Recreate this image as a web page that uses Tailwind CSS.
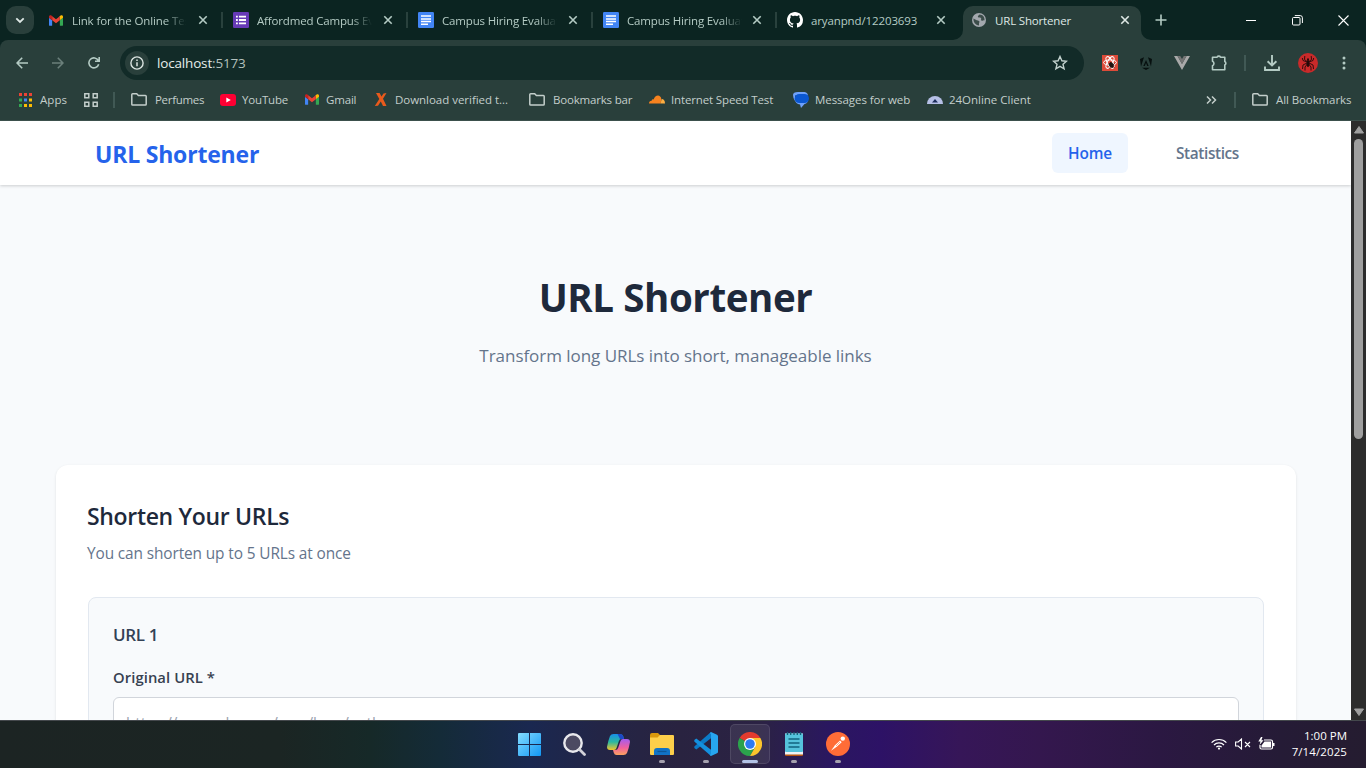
<!DOCTYPE html>
<html lang="en">
<head>
<meta charset="utf-8">
<title>URL Shortener</title>
<script src="https://cdn.jsdelivr.net/npm/@tailwindcss/browser@4"></script>
</head>
<body class="w-[1366px] h-[768px] overflow-hidden flex flex-col font-['Open_Sans','Noto_Sans',sans-serif] bg-[#293f3b]">
<svg class="hidden">
  <symbol id="x" viewBox="0 0 10 10"><path d="M1.300 1.300l7.400 7.400M8.700 1.300L1.300 8.700" stroke="currentColor" stroke-width="1.600"/></symbol>
  <symbol id="gmail" viewBox="0 0 16 12"><path d="M1 12h2.600V5.600L0 2.800V11a1 1 0 001 1z" fill="#4285f4"/><path d="M12.400 12H15a1 1 0 001-1V2.800l-3.600 2.800z" fill="#34a853"/><path d="M12.400 1.200v4.400L16 2.800V1.600C16 .2 14.400-.5 13.200.4z" fill="#fbbc04"/><path d="M3.600 5.600V1.200L8 4.500l4.400-3.300v4.400L8 9z" fill="#ea4335"/><path d="M0 1.600v1.200l3.600 2.800V1.200L2.800.4C1.600-.5 0 .2 0 1.600z" fill="#c5221f"/></symbol>
  <symbol id="docs" viewBox="0 0 16 16"><rect width="16" height="16" rx="1.200" fill="#4285f4"/><path d="M3 4h10M3 6.900h10M3 9.500h10M3 12.300h7" stroke="#fff" stroke-width="1.500"/></symbol>
  <symbol id="folder" viewBox="0 0 16 13"><path d="M1.700.8h4l1.700 1.700h7q.8 0 .8.8v8q0 .8-.8.8H1.600q-.8 0-.8-.8V1.600q0-.8.9-.8z" fill="none" stroke="#c3cecb" stroke-width="1.500"/></symbol>
</svg>

<!-- Tab strip -->
<div class="h-[40px] shrink-0 bg-[#0b2421] flex text-[11.5px] text-[#b4cbc4] pl-[6px]">
  <div class="w-[28px] h-[28px] mt-[6px] rounded-[10px] bg-[#293f3b] flex items-center justify-center shrink-0"><svg width="10" height="7" viewBox="0 0 10 7"><path d="M1.300 1.300L5 5l3.700-3.700" fill="none" stroke="#dfe9e6" stroke-width="1.800"/></svg></div>
  <div class="w-[185px] ml-[4px] pl-[11px] flex items-center shrink-0">
    <svg width="14" height="11" class="mr-[9px] shrink-0"><use href="#gmail"/></svg>
    <span class="w-[115px] mt-[2px] overflow-hidden whitespace-nowrap tracking-[-0.12px] [mask-image:linear-gradient(to_right,#000_82%,transparent)]">Link for the Online Test</span>
    <svg width="10" height="10" class="ml-[12px] shrink-0"><use href="#x"/></svg>
    <span class="w-[2px] h-[16px] bg-[#29413d] ml-[13px]"></span>
  </div>
  <div class="w-[185px] pl-[10px] flex items-center shrink-0">
    <svg width="16" height="16" viewBox="0 0 16 16" class="mr-[8px] shrink-0"><rect width="16" height="16" rx="1.200" fill="#673ab7"/><path d="M6 4.700h7M6 8h7M6 11.300h7M3 4.700h1.800M3 8h1.800M3 11.300h1.800" stroke="#fff" stroke-width="1.800"/></svg>
    <span class="w-[115px] mt-[2px] overflow-hidden whitespace-nowrap tracking-[-0.16px] [mask-image:linear-gradient(to_right,#000_82%,transparent)]">Affordmed Campus Evaluation</span>
    <svg width="10" height="10" class="ml-[11px] shrink-0"><use href="#x"/></svg>
    <span class="w-[2px] h-[16px] bg-[#29413d] ml-[13px]"></span>
  </div>
  <div class="w-[185px] pl-[10px] flex items-center shrink-0">
    <svg width="16" height="16" class="mr-[8px] shrink-0"><use href="#docs"/></svg>
    <span class="w-[115px] mt-[2px] overflow-hidden whitespace-nowrap tracking-[-0.16px] [mask-image:linear-gradient(to_right,#000_82%,transparent)]">Campus Hiring Evaluation</span>
    <svg width="10" height="10" class="ml-[11px] shrink-0"><use href="#x"/></svg>
    <span class="w-[2px] h-[16px] bg-[#29413d] ml-[13px]"></span>
  </div>
  <div class="w-[184px] pl-[10px] flex items-center shrink-0">
    <svg width="16" height="16" class="mr-[8px] shrink-0"><use href="#docs"/></svg>
    <span class="w-[115px] mt-[2px] overflow-hidden whitespace-nowrap tracking-[-0.16px] [mask-image:linear-gradient(to_right,#000_82%,transparent)]">Campus Hiring Evaluation</span>
    <svg width="10" height="10" class="ml-[10px] shrink-0"><use href="#x"/></svg>
    <span class="w-[2px] h-[16px] bg-[#29413d] ml-[13px]"></span>
  </div>
  <div class="w-[177px] pl-[10px] flex items-center shrink-0">
    <svg width="16" height="16" viewBox="0 0 16 16" class="mr-[8px] shrink-0"><path fill="#fff" d="M8 0C3.580 0 0 3.580 0 8c0 3.540 2.290 6.530 5.470 7.590.4.070.55-.17.55-.38 0-.19-.01-.82-.01-1.490-2.010.37-2.530-.49-2.690-.94-.09-.23-.48-.94-.82-1.130-.28-.15-.68-.52-.01-.53.63-.01 1.080.58 1.230.82.720 1.210 1.870.87 2.330.66.070-.52.280-.87.510-1.070-1.780-.2-3.640-.89-3.640-3.950 0-.87.310-1.590.82-2.150-.08-.2-.36-1.020.08-2.120 0 0 .67-.21 2.200.82.640-.18 1.320-.27 2-.27s1.360.09 2 .27c1.530-1.040 2.200-.82 2.200-.82.440 1.100.160 1.920.080 2.120.510.560.820 1.270.820 2.150 0 3.070-1.870 3.750-3.650 3.950.290.250.540.730.540 1.480 0 1.070-.01 1.930-.01 2.200 0 .210.150.460.550.380A8.010 8.010 0 0016 8c0-4.420-3.580-8-8-8z"/></svg>
    <span class="w-[115px] mt-[2px] whitespace-nowrap tracking-[-0.12px]">aryanpnd/12203693</span>
    <svg width="10" height="10" class="ml-[10px] shrink-0"><use href="#x"/></svg>
  </div>
  <div class="flex items-end shrink-0">
    <svg width="10" height="10" class="-ml-[1px]" viewBox="0 0 10 10"><path d="M0 10A10 10 0 0010 0V10z" fill="#293f3b"/></svg>
    <div class="w-[178px] h-[34px] rounded-t-[10px] bg-[#293f3b] flex items-center pl-[9px] pb-[6px] text-[#dfe9e6]">
      <svg width="14" height="14" viewBox="0 0 14 14" class="mr-[9px] shrink-0"><circle cx="7" cy="7" r="7" fill="#a3a8ae"/><path d="M1.500 5.500c2 .8 2.600 2 4.500 2 1.500.5 2 1.500 1 2.500v2.500C3.500 12 1.200 9.500 1.500 5.500zM7.500 1.500c-1 1-2 1.300-1.500 2.500S8 4 9 5.200 8 6.800 9.500 7.500s1.500-.5 3 0C12.800 4 11 1.800 7.500 1.500z" fill="#3c4d4a"/></svg>
      <span class="w-[125px] mt-[2px] tracking-[-0.17px]">URL Shortener</span>
      <svg width="10" height="10" class="shrink-0"><use href="#x"/></svg>
    </div>
    <svg width="10" height="10" viewBox="0 0 10 10"><path d="M10 10A10 10 0 010 0V10z" fill="#293f3b"/></svg>
  </div>
  <div class="flex-1 flex items-center text-white">
    <svg width="12" height="12" viewBox="0 0 12 12" class="ml-[4px]"><path d="M6 .5v11M.5 6h11" stroke="#b4cbc4" stroke-width="1.600"/></svg>
    <svg width="10" height="1" class="ml-[79px]"><path d="M0 .5h10" stroke="currentColor"/></svg>
    <svg width="11" height="11" viewBox="0 0 11 11" class="ml-[36px]" fill="none" stroke="currentColor"><rect x=".5" y="2.500" width="7.500" height="7.500" rx="1"/><path d="M2.800.6h5.400q2.200 0 2.200 2.200v5.200"/></svg>
    <svg width="11" height="11" viewBox="0 0 11 11" class="ml-[35px]"><path d="M.5.5l10 10M10.500.5l-10 10" stroke="currentColor" stroke-width="1.100"/></svg>
  </div>
</div>

<!-- Toolbar -->
<div class="h-[46px] shrink-0 bg-[#0b2421]">
<div class="h-full bg-[#293f3b] rounded-t-[8px] flex items-center pl-[16px] text-[#b4cbc4]">
  <svg width="12" height="12" viewBox="0 0 12 12" fill="none" stroke="currentColor" stroke-width="1.600"><path d="M12 6H1.200M6.200.7L1 6l5.200 5.300"/></svg>
  <svg width="12" height="12" viewBox="0 0 12 12" fill="none" stroke="#6b807b" stroke-width="1.600" class="ml-[24px]"><path d="M0 6h10.800M5.800.7L11 6l-5.200 5.300"/></svg>
  <svg width="12" height="12" viewBox="0 0 12 12" fill="none" stroke="currentColor" stroke-width="1.600" class="ml-[24px]"><path d="M10.700 7.300A5 5 0 1110.300 3.500M11.200 0v4.300H7"/></svg>
  <div class="w-[964px] h-[34px] rounded-full bg-[#122b28] ml-[20px] flex items-center pl-[5px] shrink-0">
    <div class="w-[24px] h-[24px] rounded-full bg-[#293f3b] flex items-center justify-center"><svg width="14" height="14" viewBox="0 0 14 14"><circle cx="7" cy="7" r="6.100" fill="none" stroke="#dbe4e1" stroke-width="1.400"/><path d="M7 6.300v4M7 3.500V5" stroke="#dbe4e1" stroke-width="1.500"/></svg></div>
    <span class="ml-[8px] text-[13.5px] tracking-[-0.17px] text-[#e6eeeb]">localhost<span class="text-[#b4c1be]">:5173</span></span>
    <svg width="16" height="16" viewBox="0 0 16 16" class="ml-auto mr-[16px]"><path d="M8 1.500l1.900 4.300 4.600.4-3.500 3.100 1.100 4.600L8 11.400l-4.100 2.500L5 9.300 1.500 6.200l4.600-.4z" fill="none" stroke="#c3d2ce" stroke-width="1.400"/></svg>
  </div>
  <svg width="16" height="16" viewBox="0 0 16 16" class="ml-[18px]"><path fill="#dd4b39" d="M0 0h16v16H0z"/><g fill="none" stroke="#fff" stroke-width="1"><ellipse cx="8" cy="7.500" rx="6.500" ry="2.600"/><ellipse cx="8" cy="7.500" rx="6.500" ry="2.600" transform="rotate(60 8 7.500)"/><ellipse cx="8" cy="7.500" rx="6.500" ry="2.600" transform="rotate(120 8 7.500)"/></g><ellipse cx="9.300" cy="10" rx="2.200" ry="2.800" fill="#20130f" transform="rotate(-35 9.300 10)"/><path d="M6.500 9l6 3.500M12.500 8.500L7.500 13M8.500 7l2 6" stroke="#20130f" stroke-width=".8"/></svg>
  <svg width="12" height="13" viewBox="0 0 12 13" class="ml-[22px]" fill="#07100f"><path d="M0 2l4-1.800L1 9.500zM12 2L8 .2l3 9.300zM6 3L3.300 9h1.500L6 6l1.200 3h1.500zM2 10.800h8L6 13z"/></svg>
  <svg width="16" height="14" viewBox="0 0 16 14" class="ml-[22px]"><path d="M0 0h3.500L8 8l4.500-8H16L8 14z" fill="#a9a9a9"/><path d="M3.500 0h2.700L8 3l1.800-3h2.700L8 8z" fill="#747474"/></svg>
  <svg width="17" height="17" viewBox="0 0 17 17" class="ml-[21px] -mr-px -mt-[2px]"><path d="M1.500 3.200h4.600a1.900 1.900 0 013.400 0h4.300v4.300a1.900 1.900 0 010 3.400v4.800H1.500v-4a2.400 2.400 0 000-4.400z" fill="none" stroke="#b4cbc4" stroke-width="1.600" stroke-linejoin="round"/></svg>
  <span class="w-[2px] h-[16px] bg-[#415955] ml-[17px]"></span>
  <svg width="16" height="16" viewBox="0 0 16 16" class="ml-[18px]" fill="none" stroke="#b4cbc4" stroke-width="1.900"><path d="M8 0v10M3.600 6.200L8 10.500l4.400-4.300M1 11.500V15h14v-3.500"/></svg>
  <svg width="20" height="20" viewBox="0 0 20 20" class="ml-[18px]"><circle cx="10" cy="10" r="10" fill="#c92a2a"/><g fill="none" stroke="#240a0a" stroke-width=".9"><path d="M9 8.500L6.500 6.500 6.800 3M11 8.500l2.500-2 -.3-3.500M9 9L5 7.500 4.300 5M11 9l4-1.500.7-2.500M9 10l-4 2-.5 4M11 10l4 2 .5 4M9.300 11l-2.300 3v3.500M10.700 11l2.300 3v3.500"/></g><ellipse cx="10" cy="6.500" rx="1" ry="1.200" fill="#240a0a"/><ellipse cx="10" cy="10.500" rx="1.400" ry="3.600" fill="#240a0a"/></svg>
  <svg width="4" height="14" viewBox="0 0 4 14" class="ml-[24px]" fill="#b4cbc4"><circle cx="2" cy="2" r="1.500"/><circle cx="2" cy="7" r="1.500"/><circle cx="2" cy="12" r="1.500"/></svg>
</div>
</div>

<!-- Bookmarks -->
<div class="h-[35px] shrink-0 flex items-center pl-[18px] pb-[7px] text-[11.5px] whitespace-nowrap text-[#c3cecb] border-b border-[#3b504c] tracking-[-0.17px]">
  <div class="w-[66px] flex items-center"><svg width="15" height="14" viewBox="0 0 15 14" class="mr-[7px] shrink-0"><path d="M1 1.500h3M6 1.500h3M11 1.500h3" stroke="#ea4335" stroke-width="3"/><path d="M1 7h3M1 12.500h3" stroke="#34a853" stroke-width="3"/><path d="M6 7h3" stroke="#4285f4" stroke-width="3"/><path d="M11 7h3M6 12.500h3M11 12.500h3" stroke="#fbbc04" stroke-width="3"/></svg><span class="tracking-[0.05px]">Apps</span></div>
  <svg width="14" height="14" viewBox="0 0 14 14" fill="none" stroke="#c3cecb" stroke-width="1.500" class="shrink-0"><path d="M.8.8h4v4h-4zM9.200.8h4v4h-4zM.8 9.200h4v4h-4zM9.200 9.200h4v4h-4z"/></svg>
  <span class="w-[2px] h-[16px] bg-[#415955] ml-[15px] mr-[16px]"></span>
  <div class="w-[89px] flex items-center shrink-0"><svg width="16" height="13" class="mr-[8px]"><use href="#folder"/></svg><span class="tracking-[-0.3px]">Perfumes</span></div>
  <div class="w-[85px] flex items-center shrink-0"><svg width="16" height="12" viewBox="0 0 16 12" class="mr-[6px]"><rect width="16" height="12" rx="3" fill="#ff0033"/><path d="M6.300 3.400L10.800 6 6.300 8.600z" fill="#fff"/></svg><span>YouTube</span></div>
  <div class="w-[69px] flex items-center shrink-0"><svg width="14" height="11" class="mr-[7px]"><use href="#gmail"/></svg><span>Gmail</span></div>
  <div class="w-[155px] flex items-center shrink-0"><svg width="14" height="13" viewBox="0 0 14 13" class="mr-[7px]"><path d="M2 0h3.600L7.500 3.500 9.500.5 12.500 0 9 5.700l3.500 7.300H9L6.800 8.500 4 12.700.8 13l4.500-7z" fill="#e85a1c"/></svg><span class="tracking-[-0.03px]">Download verified t...</span></div>
  <div class="w-[120px] flex items-center shrink-0"><svg width="16" height="13" class="mr-[8px]"><use href="#folder"/></svg><span class="tracking-[-0.19px]">Bookmarks bar</span></div>
  <div class="w-[144px] flex items-center shrink-0"><svg width="16" height="9" viewBox="0 0 16 9" class="mr-[6px]"><path d="M0 8.500Q0 6 2.600 5.800 3 4 4.600 4.400 6 .5 9 .5q2.600.2 3.300 3.200l-.6 4.800z" fill="#f6821f"/><path d="M12.600 4q3.400 0 3.400 4.500h-4.400z" fill="#fbad41"/></svg><span class="tracking-[-0.14px]">Internet Speed Test</span></div>
  <div class="w-[134px] flex items-center shrink-0"><svg width="16" height="16" viewBox="0 0 16 16" class="mr-[6px]"><path d="M5 0h6.500Q15 .5 14.800 3.500H2V9Q0 6 0 3 0 0 5 0z" fill="#6fa1fb"/><path d="M2 8h13q0 3-3.500 4L8 16l-1-3.600Q2.500 12 2 8z" fill="#6fa1fb"/><rect x="1.700" y="2" width="14.300" height="9" rx="4.500" fill="#0b57d0"/></svg><span class="tracking-[-0.06px]">Messages for web</span></div>
  <div class="w-[110px] flex items-center shrink-0"><svg width="16" height="8" viewBox="0 0 16 8" class="mr-[6px]"><path d="M0 8a8 8 0 0116 0z" fill="#b6c0e6"/><path d="M5 6.500L8 3l3 3.500z" fill="#1c2c5c"/></svg><span class="tracking-[-0.02px]">24Online Client</span></div>
  <svg width="11" height="8" viewBox="0 0 11 8" class="ml-auto shrink-0" fill="none" stroke="#c3cecb" stroke-width="1.500"><path d="M1 .5L4.500 4 1 7.500M6 .5L9.500 4 6 7.500"/></svg>
  <span class="w-[2px] h-[16px] bg-[#415955] ml-[17px] mr-[16px]"></span>
  <svg width="16" height="13" class="mr-[8px] shrink-0"><use href="#folder"/></svg><span class="w-[90px] tracking-[-0.1px]">All Bookmarks</span>
</div>

<!-- Page -->
<div class="h-[599px] shrink-0 flex overflow-hidden">
  <div class="w-[1351px] bg-[#f8fafc] flex flex-col">
    <nav class="h-[64px] shrink-0 bg-white shadow-[0_1px_3px_rgba(0,0,0,0.18)] flex items-center pl-[95px] pr-[96px]">
      <span class="text-[23px] font-bold text-[#2563eb] tracking-[-0.2px] mt-[2px]">URL Shortener</span>
      <div class="ml-auto flex gap-[32px] text-[15.4px] font-semibold">
        <span class="w-[76px] h-[40px] pt-[2px] rounded-md bg-[#eff6ff] text-[#2563eb] flex items-center justify-center tracking-[-0.14px]">Home</span>
        <span class="w-[95px] h-[40px] pt-[2px] text-[#64748b] flex items-center justify-center tracking-[-0.39px]">Statistics</span>
      </div>
    </nav>
    <header class="h-[280px] shrink-0 text-center pt-[84px]">
      <h1 class="text-[38.5px] leading-[56px] font-bold text-[#1e293b] tracking-[-0.42px]">URL Shortener</h1>
      <p class="text-[17px] leading-[28px] text-[#64748b] mt-[17px] tracking-[-0.04px]">Transform long URLs into short, manageable links</p>
    </header>
    <section class="mx-[56px] w-[1240px] h-[400px] shrink-0 bg-white rounded-xl shadow-[0_1px_3px_rgba(0,0,0,0.1)] px-[32px] pt-[31px]">
      <h2 class="text-[23px] leading-[40px] font-semibold text-[#1e293b] tracking-[-0.33px] -ml-px">Shorten Your URLs</h2>
      <p class="text-[15.4px] leading-[26px] text-[#64748b] mt-[5px] tracking-[-0.11px] -ml-px">You can shorten up to 5 URLs at once</p>
      <div class="mt-[30px] h-[300px] rounded-lg border border-[#e2e8f0] bg-[#f8fafc] px-[24px] pt-[23px]">
        <h3 class="text-[17px] leading-[28px] font-semibold text-[#334155] tracking-[-0.37px]">URL 1</h3>
        <div class="text-[14.8px] leading-[24px] font-semibold text-[#374151] mt-[16px] tracking-[0.08px]">Original URL *</div>
        <div class="mt-[8px] h-[48px] w-[1126px] rounded-md border border-[#d1d5db] bg-white px-[12px] pt-[14px] text-[15.4px] leading-[24px] text-[#9ca3af] tracking-[-0.14px]">https://example.com/very/long/path</div>
      </div>
    </section>
  </div>
  <div class="flex-1 bg-[#2c2c2c] flex flex-col items-center pt-[5px] pb-[4px]">
    <svg width="10" height="8" viewBox="0 0 10 8"><path d="M5 .5L9.500 7H.5z" fill="#9f9f9f" stroke="#9f9f9f" stroke-linejoin="round"/></svg>
    <div class="mt-[5px] w-[9px] h-[300px] rounded-full bg-[#9f9f9f]"></div>
    <svg width="10" height="8" viewBox="0 0 10 8" class="mt-auto"><path d="M5 7.500L9.500 1H.5z" fill="#9f9f9f" stroke="#9f9f9f" stroke-linejoin="round"/></svg>
  </div>
</div>

<!-- Taskbar -->
<div class="h-[48px] shrink-0 border-t border-[#44484c] flex items-center bg-[linear-gradient(90deg,#1c2423_0px,#1b2523_280px,#162928_370px,#142b38_440px,#1a2850_530px,#232546_600px,#292340_680px,#2b2244_760px,#2a1760_830px,#2d1266_880px,#361658_960px,#34174e_1040px,#2b1842_1160px,#251b36_1280px,#251c30_1366px)]">
  <div class="pl-[508px] pb-[1px] flex gap-[4px]">
    <div class="w-[40px] h-[40px] ml-[1px] flex items-center justify-center"><svg width="23" height="23" viewBox="0 0 23 23"><defs><linearGradient id="w" x1="0" y1="0" x2="1" y2="1"><stop stop-color="#84dcff"/><stop offset="1" stop-color="#1197f5"/></linearGradient></defs><path fill="url(#w)" d="M0 1q0-1 1-1h10v11H0zM12 0h10q1 0 1 1v10H12zM0 12h11v11H1q-1 0-1-1zM12 12h11v10q0 1-1 1H12z"/></svg></div>
    <div class="w-[40px] h-[40px] ml-[1px] flex items-center justify-center"><svg width="23" height="23" viewBox="0 0 23 23"><circle cx="10" cy="10" r="8.700" fill="#4c4a62" stroke="#e8e8ec" stroke-width="2.400"/><path d="M16.500 16.500l5 5" stroke="#d2d2d8" stroke-width="2.800" stroke-linecap="round"/></svg></div>
    <div class="w-[40px] h-[40px] flex items-center justify-center"><svg width="23" height="21" viewBox="0 0 23 21"><defs><linearGradient id="c1" x1="0" y1="0" x2="0" y2="1"><stop stop-color="#178fe8"/><stop offset=".5" stop-color="#2bb8a0"/><stop offset="1" stop-color="#f5c52a"/></linearGradient><linearGradient id="c2" x1="0" y1="0" x2="0" y2="1"><stop stop-color="#a45cf0"/><stop offset=".55" stop-color="#f0609e"/><stop offset="1" stop-color="#fba35e"/></linearGradient></defs><path d="M6.500 0h7q2 0 2.800 2.500l.7 2.500h-2.500q-2 0-2.700 2.300L9.500 14Q9 16 7 16H3Q0 16 0 13q1-6 3-11Q4 0 6.500 0z" fill="url(#c1)"/><path d="M10.500 0h3q2 0 2.800 2.500l.7 2.500h-4z" fill="#1d48c8"/><path d="M16.500 21h-7q-2 0-2.800-2.500L6 16h2.500q2 0 2.700-2.300L13.500 7Q14 5 16 5h4q3 0 3 3-1 6-3 11-1 2-3.500 2z" fill="url(#c2)"/></svg></div>
    <div class="w-[40px] h-[40px] flex items-center justify-center relative"><svg width="24" height="22" viewBox="0 0 24 22"><path d="M0 2q0-2 2-2h6l2 2v4H0z" fill="#d9980c"/><path d="M0 4.500h7.500L10 2h13q1 0 1 1v18q0 1-1 1H1q-1 0-1-1z" fill="#fdcf4a"/><path d="M4 22v-4q0-3 3-3h10q3 0 3 3v4z" fill="#1173c5"/><path d="M7.500 18.500h9" stroke="#0c5797" stroke-width="1.200"/></svg><i class="absolute left-[17px] bottom-[1px] w-[6px] h-[3px] rounded bg-[#a5a1ae]"></i></div>
    <div class="w-[40px] h-[40px] flex items-center justify-center relative"><svg width="24" height="24" viewBox="0 0 24 24"><path d="M17 6.200L2.300 17.600.3 16v-1.500L17 0z" fill="#0b7bc8"/><path d="M17 17.800L2.300 6.400.3 8v1.500L17 24z" fill="#1490df"/><path d="M17 0l6 2.700q1 .5 1 1.600v15.400q0 1.100-1 1.600L17 24l-1.500-1.500Q17 23 17 21.500v-19Q17 1 15.500 1.500z" fill="#27a6f0"/></svg><i class="absolute left-[17px] bottom-[1px] w-[6px] h-[3px] rounded bg-[#a5a1ae]"></i></div>
    <div class="w-[40px] h-[40px] flex items-center justify-center relative rounded-[5px] bg-white/8 border border-white/10"><svg width="24" height="24" viewBox="0 0 24 24"><path d="M12 12L1.600 6A12 12 0 0122.400 6z" fill="#e33b2e"/><path d="M12 12L1.600 6A12 12 0 0012 24l5.200-9z" fill="#2ba24c"/><path d="M12 6h10.400A12 12 0 0112 24l5.200-9z" fill="#fdc52c"/><circle cx="12" cy="12" r="6" fill="#fff"/><circle cx="12" cy="12" r="4.800" fill="#2b7af0"/></svg><i class="absolute left-[11px] bottom-0 w-[16px] h-[3px] rounded bg-[#b3c3e6]"></i></div>
    <div class="w-[40px] h-[40px] flex items-center justify-center relative"><svg width="18" height="24" viewBox="0 0 18 24"><rect y="20" width="18" height="4" rx="1" fill="#b5530f"/><rect y="1.500" width="18" height="21" fill="#eef2f4"/><rect y="1.500" width="18" height="18.500" rx="1" fill="#55c3dc"/><path d="M2.500 0v3M5.700 0v3M9 0v3M12.300 0v3M15.500 0v3" stroke="#145f78" stroke-width="1.300"/><path d="M3.500 7h11M3.500 11h11M3.500 15h11" stroke="#12647f" stroke-width="1.500"/></svg><i class="absolute left-[17px] bottom-[1px] w-[6px] h-[3px] rounded bg-[#a5a1ae]"></i></div>
    <div class="w-[40px] h-[40px] flex items-center justify-center relative"><svg width="24" height="24" viewBox="0 0 24 24"><circle cx="12" cy="12" r="12" fill="#ff6c37"/><circle cx="16.800" cy="6.600" r="2.200" fill="#fff"/><path d="M14 8.500l1.700 1.700-5 4.500L5 18.800l4-5.500z" fill="#fff"/><path d="M10 14l4-4" stroke="#ff6c37" stroke-width=".6"/></svg><i class="absolute left-[17px] bottom-[1px] w-[6px] h-[3px] rounded bg-[#a5a1ae]"></i></div>
  </div>
  <svg width="16" height="12" viewBox="0 0 16 12" class="ml-auto -mt-[2px]" fill="none" stroke="#fff" stroke-width="1.200"><path d="M.6 4.600a10.400 10.400 0 0114.800 0M3 7a7 7 0 0110 0M5.300 9.200a3.800 3.800 0 015.400 0"/><circle cx="8" cy="10.600" r="1.100" fill="#fff" stroke="none"/></svg>
  <svg width="16" height="12" viewBox="0 0 16 12" class="ml-[8px] -mt-[2px]" fill="none" stroke="#fff" stroke-width="1.100"><path d="M.6 4v4h2.600L6.500 11V1L3.200 4zM10 4l5 5M15 4l-5 5"/></svg>
  <svg width="17" height="13" viewBox="0 0 17 13" class="ml-[7px] -mt-[3px]"><path d="M6 3h7q1.500 0 1.500 1.500v6q0 1.500-1.500 1.500H3.500Q2 12 2 10.500V8" fill="none" stroke="#fff" stroke-width="1.200"/><path d="M6.500 4.500H13v6H3.500V8.500zM15 6h1.500v3H15z" fill="#fff"/><path d="M3 0L.3 4.600h2.200L1.500 8 5.500 3.200H3.400L4.500 0z" fill="#fff"/></svg>
  <div class="w-[72px] mr-[19px] -mt-[2px] text-right text-[11.5px] leading-[16px] text-white"><div>1:00 PM</div><div class="tracking-[0.1px]">7/14/2025</div></div>
</div>
</body>
</html>
